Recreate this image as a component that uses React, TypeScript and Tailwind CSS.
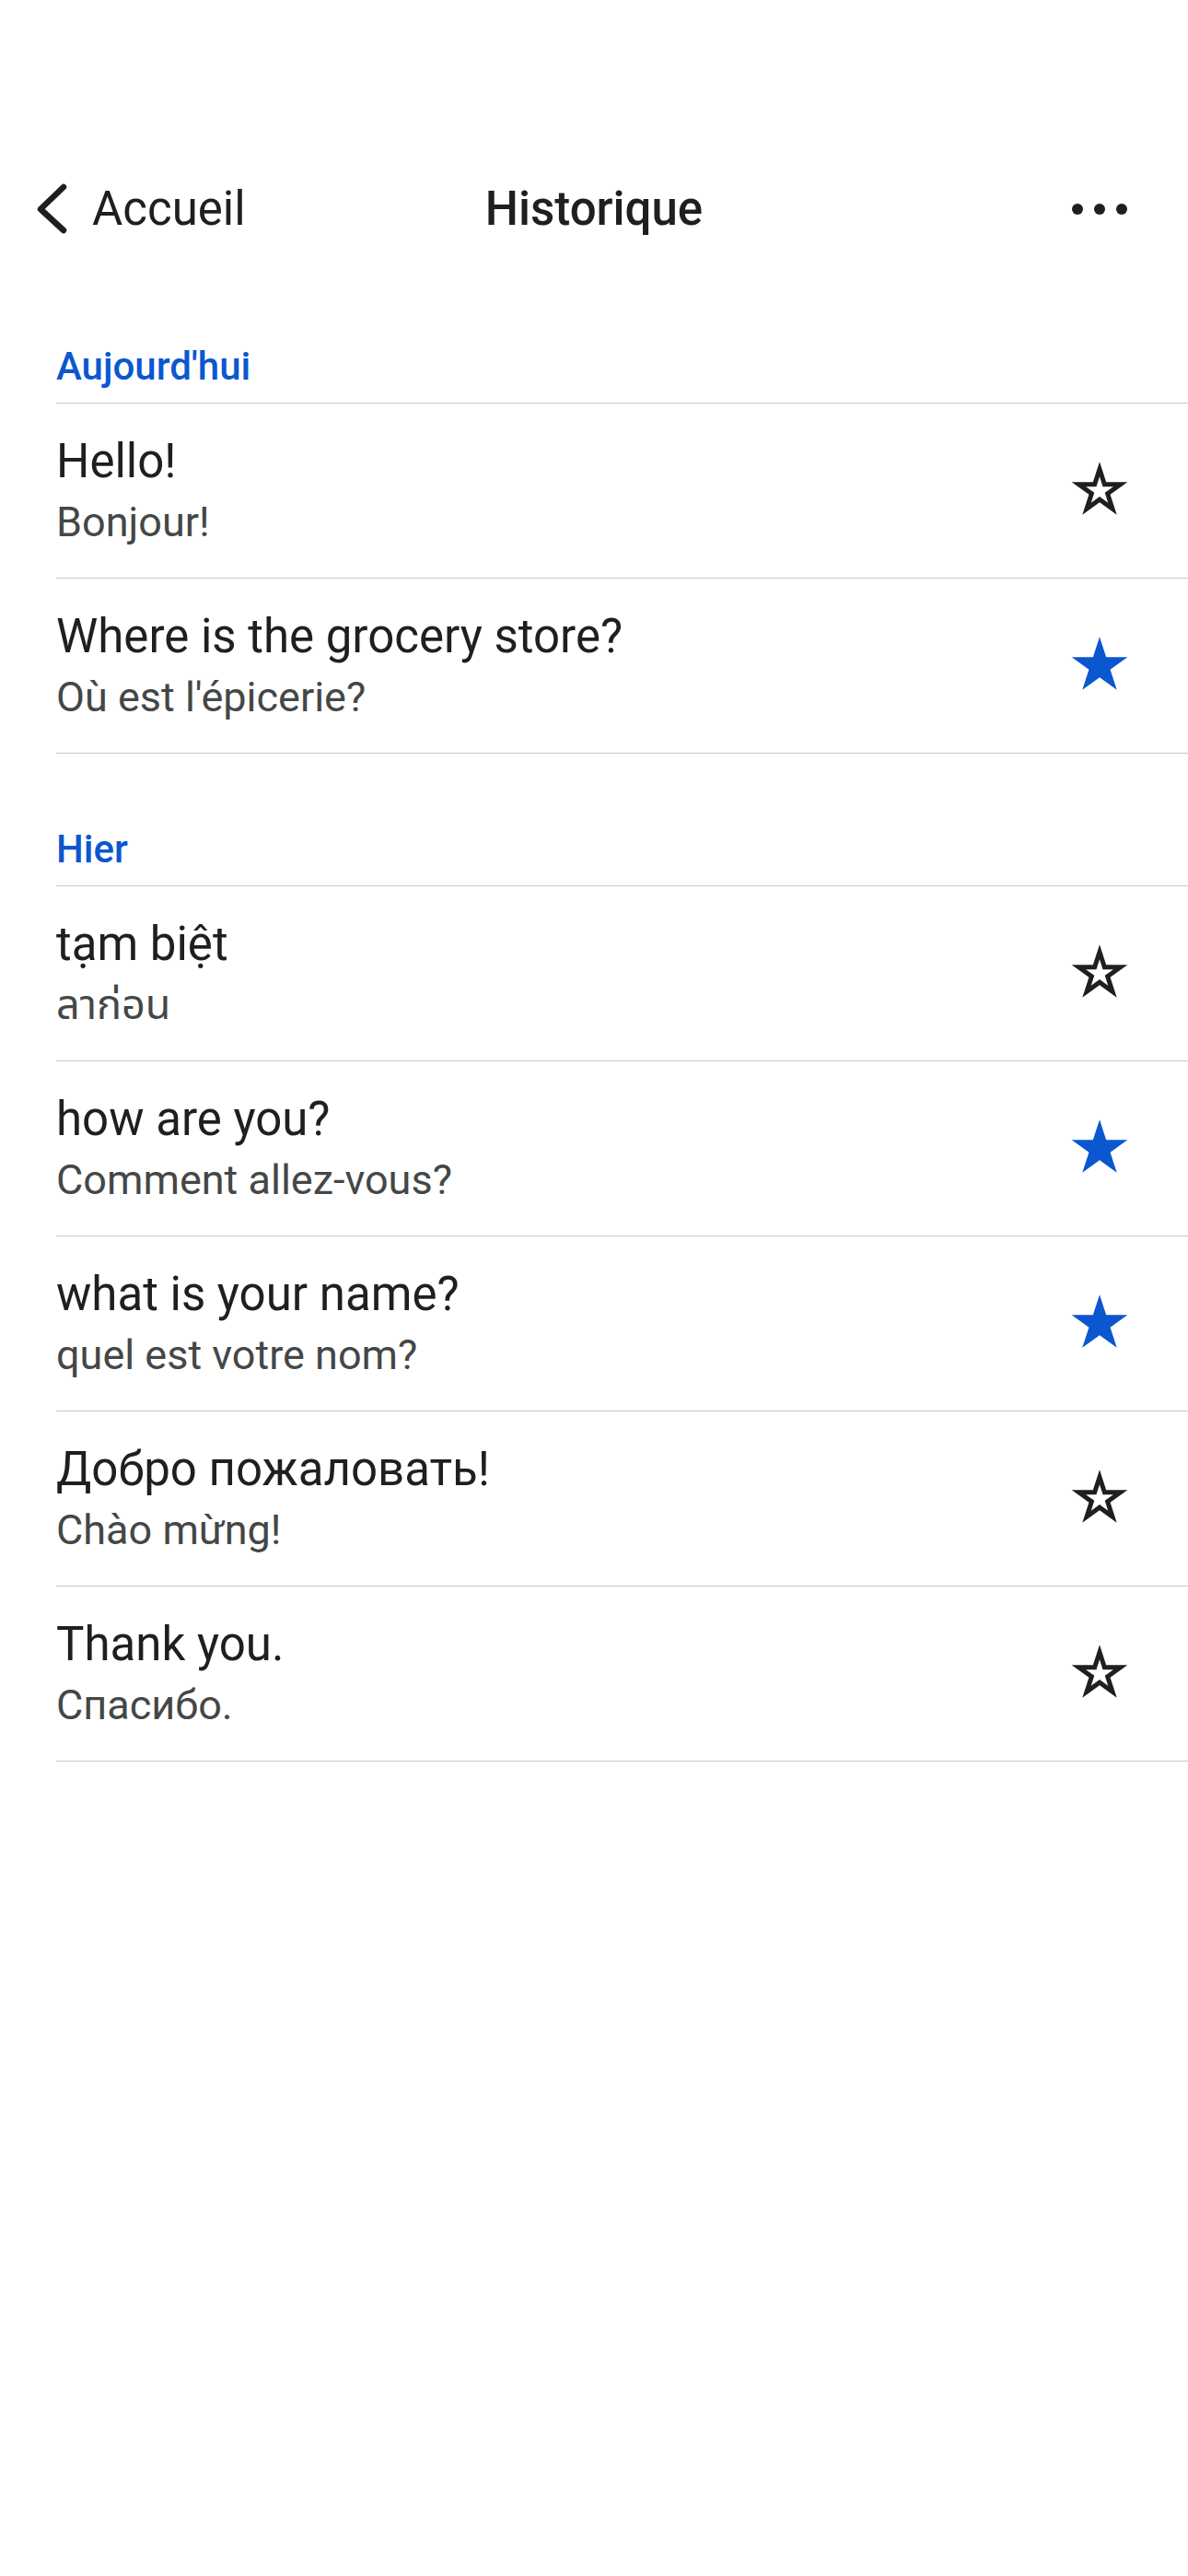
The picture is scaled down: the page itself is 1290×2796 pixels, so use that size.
import React from "react";

type Item = { src: string; dst: string; starred: boolean };

const today: Item[] = [
  { src: "Hello!", dst: "Bonjour!", starred: false },
  { src: "Where is the grocery store?", dst: "Où est l'épicerie?", starred: true },
];

const yesterday: Item[] = [
  { src: "tạm biệt", dst: "ลาก่อน", starred: false },
  { src: "how are you?", dst: "Comment allez-vous?", starred: true },
  { src: "what is your name?", dst: "quel est votre nom?", starred: true },
  { src: "Добро пожаловать!", dst: "Chào mừng!", starred: false },
  { src: "Thank you.", dst: "Спасибо.", starred: false },
];

const OUTER =
  "M32 2 L38.74 22.73 L60.53 22.73 L42.9 35.54 L49.63 56.27 L32 43.46 L14.37 56.27 L21.1 35.54 L3.47 22.73 L25.26 22.73 Z";
const INNER =
  "M32 17.21 L35.32 27.43 L46.07 27.43 L37.37 33.75 L40.69 43.97 L32 37.65 L23.31 43.97 L26.63 33.75 L17.93 27.43 L28.68 27.43 Z";

function Star({ filled }: { filled: boolean }) {
  return (
    <svg width="68" height="68" viewBox="0 0 64 64" className="shrink-0">
      {filled ? (
        <path d={OUTER} fill="#0b57d0" />
      ) : (
        <path d={OUTER + " " + INNER} fill="#1f1f1f" fillRule="evenodd" />
      )}
    </svg>
  );
}

function Row({ item }: { item: Item }) {
  return (
    <div className="flex h-[190px] items-center border-b border-[#c7c7c7] pr-[62px]">
      <div className="flex min-w-0 flex-1 flex-col gap-[9px]">
        <div className="text-[51px] leading-[60px] text-[#1f1f1f]">{item.src}</div>
        <div className="text-[45px] leading-[54px] text-[#444746]">{item.dst}</div>
      </div>
      <Star filled={item.starred} />
    </div>
  );
}

function Section({ title, items, top }: { title: string; items: Item[]; top: string }) {
  return (
    <div className={`ml-[61px] ${top}`}>
      <div className="border-b border-[#c7c7c7] pb-[14px] text-[42px] font-medium leading-[50px] text-[#0b57d0]">
        {title}
      </div>
      {items.map((it, i) => (
        <Row key={i} item={it} />
      ))}
    </div>
  );
}

export default function App() {
  return (
    <div
      className="min-h-[2796px] w-[1290px] bg-white"
      style={{ fontFamily: "Roboto, 'Noto Sans', 'Noto Sans Thai', 'DejaVu Sans', sans-serif" }}
    >
      <div className="pt-[187px]">
        <div className="grid h-[80px] grid-cols-[1fr_auto_1fr] items-center">
          <div className="flex items-center">
            <svg width="44" height="64" viewBox="0 0 44 64" className="ml-[34px]">
              <path
                d="M35 8 L10 32 L35 55"
                fill="none"
                stroke="#1f1f1f"
                strokeWidth="6.5"
                strokeLinecap="round"
                strokeLinejoin="round"
              />
            </svg>
            <span className="ml-[22px] text-[51px] leading-[60px] text-[#1f1f1f]">Accueil</span>
          </div>
          <div className="text-[51px] font-medium leading-[60px] text-[#1f1f1f]">Historique</div>
          <div className="flex items-center justify-end gap-[12px] pr-[66px]">
            <span className="h-[12px] w-[12px] rounded-full bg-[#1f1f1f]" />
            <span className="h-[12px] w-[12px] rounded-full bg-[#1f1f1f]" />
            <span className="h-[12px] w-[12px] rounded-full bg-[#1f1f1f]" />
          </div>
        </div>
      </div>
      <Section title="Aujourd'hui" items={today} top="pt-[106px]" />
      <Section title="Hier" items={yesterday} top="pt-[79px]" />
    </div>
  );
}
